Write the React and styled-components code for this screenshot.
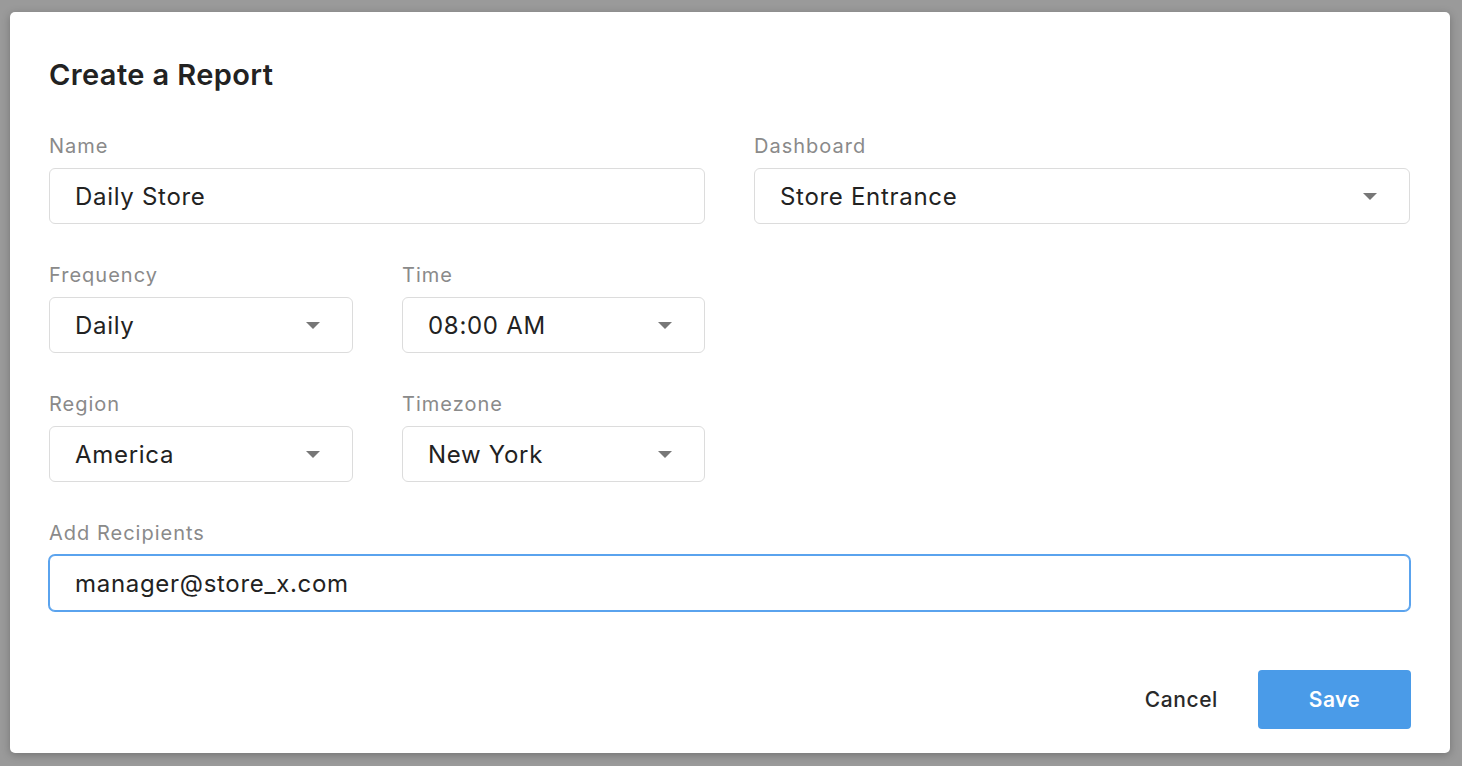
import React from "react";
import styled, { createGlobalStyle } from "styled-components";

const Global = createGlobalStyle`
  html, body { margin: 0; padding: 0; }
  body {
    background: #9a9a9a;
    font-family: Inter, "Noto Sans", "Liberation Sans", sans-serif;
    -webkit-font-smoothing: antialiased;
  }
  * { box-sizing: border-box; }
`;

const Backdrop = styled.div`
  width: 1462px;
  height: 766px;
  padding: 12px 12px 13px 10px;
  display: flex;
`;

const Modal = styled.div`
  flex: 1;
  background: #fff;
  border-radius: 5px;
  box-shadow: 0 2px 8px rgba(0, 0, 0, 0.25);
  padding: 45px 39px 24px 39px;
  display: flex;
  flex-direction: column;
`;

const Title = styled.h1`
  margin: 0 0 42px;
  font-size: 29px;
  line-height: 35px;
  font-weight: 600;
  color: #222;
  letter-spacing: 0.4px;
`;

const Grid = styled.div`
  display: grid;
  grid-template-columns: 304px 303px 656px;
  column-gap: 49px;
  row-gap: 39px;
`;

const Field = styled.div`
  display: flex;
  flex-direction: column;
  grid-column: ${(p) => p.$span || "auto"};
`;

const Label = styled.label`
  font-size: 20px;
  line-height: 24px;
  letter-spacing: 1px;
  color: #8a8a8a;
  margin-bottom: 10px;
`;

const Box = styled.div`
  height: 56px;
  border: 1px solid ${(p) => (p.$focused ? "#5aa3ee" : "#dcdcdc")};
  box-shadow: ${(p) => (p.$focused ? "0 0 0 1px #5aa3ee" : "none")};
  border-radius: 6px;
  padding: 0 32px 0 25px;
  display: flex;
  align-items: center;
  justify-content: space-between;
  font-size: 24px;
  letter-spacing: 0.7px;
  color: #222;
  background: #fff;
`;

const Caret = styled.span`
  width: 0;
  height: 0;
  border-left: 7px solid transparent;
  border-right: 7px solid transparent;
  border-top: 7px solid #777;
`;

const Footer = styled.div`
  margin-top: 59px;
  display: flex;
  justify-content: flex-end;
  align-items: center;
  gap: 40px;
`;

const TextButton = styled.button`
  background: none;
  border: none;
  font-family: inherit;
  font-size: 21px;
  font-weight: 500;
  letter-spacing: 0.6px;
  color: #2a2a2a;
  padding: 0;
  cursor: pointer;
`;

const PrimaryButton = styled.button`
  width: 153px;
  height: 59px;
  background: #4a9be8;
  border: none;
  border-radius: 4px;
  font-family: inherit;
  font-size: 21px;
  font-weight: 600;
  letter-spacing: 0.4px;
  color: #fff;
  cursor: pointer;
`;

function Select({ value }) {
  return (
    <Box>
      <span>{value}</span>
      <Caret />
    </Box>
  );
}

export default function App() {
  return (
    <>
      <Global />
      <Backdrop>
        <Modal>
          <Title>Create a Report</Title>
          <Grid>
            <Field $span="1 / 3">
              <Label>Name</Label>
              <Box>Daily Store</Box>
            </Field>
            <Field $span="3 / 4">
              <Label>Dashboard</Label>
              <Select value="Store Entrance" />
            </Field>
            <Field $span="1 / 2">
              <Label>Frequency</Label>
              <Select value="Daily" />
            </Field>
            <Field $span="2 / 3">
              <Label>Time</Label>
              <Select value="08:00 AM" />
            </Field>
            <Field $span="1 / 2">
              <Label>Region</Label>
              <Select value="America" />
            </Field>
            <Field $span="2 / 3">
              <Label>Timezone</Label>
              <Select value="New York" />
            </Field>
            <Field $span="1 / 4">
              <Label>Add Recipients</Label>
              <Box $focused>manager@store_x.com</Box>
            </Field>
          </Grid>
          <Footer>
            <TextButton>Cancel</TextButton>
            <PrimaryButton>Save</PrimaryButton>
          </Footer>
        </Modal>
      </Backdrop>
    </>
  );
}
